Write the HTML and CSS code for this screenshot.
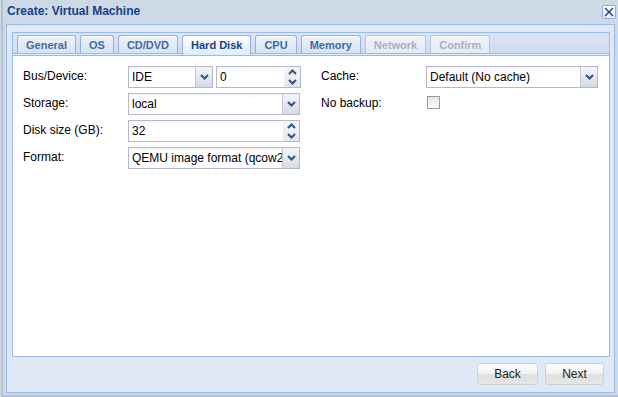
FILE: index.html
```html
<!DOCTYPE html>
<html lang="en">
<head>
    <meta charset="UTF-8">
    <link rel="stylesheet" href="styles.css">
    <title>Create: Virtual Machine</title>
</head>
<body>
    <div class="window">
        <div class="win-header">
            <span class="win-title">Create: Virtual Machine</span>
            <span class="win-close">
                <svg width="10" height="10" viewBox="0 0 10 10"><path d="M1 1L9 9M9 1L1 9" stroke="#15428b" stroke-width="1.4"/></svg>
            </span>
        </div>
        <div class="win-body">
            <div class="tabpanel">
                <div class="tabbar">
                    <span class="tab">General</span>
                    <span class="tab">OS</span>
                    <span class="tab">CD/DVD</span>
                    <span class="tab active">Hard Disk</span>
                    <span class="tab">CPU</span>
                    <span class="tab">Memory</span>
                    <span class="tab disabled">Network</span>
                    <span class="tab disabled">Confirm</span>
                </div>
                <div class="tab-spacer"></div>
                <div class="tab-body">
                    <div class="form-cols">
                        <div class="col">
                            <div class="row">
                                <label class="lbl">Bus/Device:</label>
                                <div class="pair">
                                    <div class="field combo small">
                                        <span class="val">IDE</span>
                                        <span class="trigger"><svg width="9" height="6" viewBox="0 0 9 6"><path d="M1 1L4.5 4.5L8 1" fill="none" stroke="#30527f" stroke-width="2"/></svg></span>
                                    </div>
                                    <div class="field spin small">
                                        <span class="val">0</span>
                                        <span class="spin-trigger">
                                            <span class="half"><svg width="9" height="6" viewBox="0 0 9 6"><path d="M1 5L4.5 1.5L8 5" fill="none" stroke="#30527f" stroke-width="2"/></svg></span>
                                            <span class="half"><svg width="9" height="6" viewBox="0 0 9 6"><path d="M1 1L4.5 4.5L8 1" fill="none" stroke="#30527f" stroke-width="2"/></svg></span>
                                        </span>
                                    </div>
                                </div>
                            </div>
                            <div class="row">
                                <label class="lbl">Storage:</label>
                                <div class="field combo">
                                    <span class="val">local</span>
                                    <span class="trigger"><svg width="9" height="6" viewBox="0 0 9 6"><path d="M1 1L4.5 4.5L8 1" fill="none" stroke="#30527f" stroke-width="2"/></svg></span>
                                </div>
                            </div>
                            <div class="row">
                                <label class="lbl">Disk size (GB):</label>
                                <div class="field spin">
                                    <span class="val">32</span>
                                    <span class="spin-trigger">
                                        <span class="half"><svg width="9" height="6" viewBox="0 0 9 6"><path d="M1 5L4.5 1.5L8 5" fill="none" stroke="#30527f" stroke-width="2"/></svg></span>
                                        <span class="half"><svg width="9" height="6" viewBox="0 0 9 6"><path d="M1 1L4.5 4.5L8 1" fill="none" stroke="#30527f" stroke-width="2"/></svg></span>
                                    </span>
                                </div>
                            </div>
                            <div class="row">
                                <label class="lbl">Format:</label>
                                <div class="field combo">
                                    <span class="val">QEMU image format (qcow2)</span>
                                    <span class="trigger"><svg width="9" height="6" viewBox="0 0 9 6"><path d="M1 1L4.5 4.5L8 1" fill="none" stroke="#30527f" stroke-width="2"/></svg></span>
                                </div>
                            </div>
                        </div>
                        <div class="col">
                            <div class="row">
                                <label class="lbl">Cache:</label>
                                <div class="field combo">
                                    <span class="val">Default (No cache)</span>
                                    <span class="trigger"><svg width="9" height="6" viewBox="0 0 9 6"><path d="M1 1L4.5 4.5L8 1" fill="none" stroke="#30527f" stroke-width="2"/></svg></span>
                                </div>
                            </div>
                            <div class="row">
                                <label class="lbl">No backup:</label>
                                <span class="checkbox"></span>
                            </div>
                        </div>
                    </div>
                </div>
            </div>
            <div class="win-footer">
                <button class="btn btn-back">Back</button>
                <button class="btn btn-next">Next</button>
            </div>
        </div>
    </div>
</body>
</html>
```

FILE: styles.css
```css
/* Global */
body {
    margin: 0;
    padding: 0;
    background-color: #ced9e7;
    font-family: 'Liberation Sans', Arial, sans-serif;
    font-size: 12px;
    color: #000;
}

/* Window frame */
.window {
    width: 615px;
    height: 395px;
    margin-left: 1px;
    border-left: 2px solid #b8c0cb;
    border-bottom: 2px solid #b8c0cb;
    background-color: #ced9e7;
}

.win-header {
    display: flex;
    align-items: center;
    justify-content: space-between;
    height: 24px;
    padding: 0 2px 0 4px;
}

.win-title {
    font-size: 12px;
    font-weight: bold;
    color: #15428b;
    line-height: 14px;
    margin-top: -2px;
}

.win-close {
    display: flex;
    align-items: center;
    justify-content: center;
    width: 12px;
    height: 12px;
    margin-top: 0;
    border: 1px solid #8eaed8;
    border-radius: 2px;
    background: linear-gradient(#ffffff, #e4ecf7);
}

.win-body {
    margin: 0 3px;
    height: 369px;
    box-sizing: border-box;
    border: 1px solid #99bbe8;
    background-color: #dfe8f6;
    padding: 7px 4px 0 5px;
}

/* Tabs */
.tabbar {
    display: flex;
    align-items: flex-start;
    gap: 4px;
    height: 18px;
    padding: 2px 0 0 4px;
    border: 1px solid #99bbe8;
    background: linear-gradient(#dbe6f5, #cfdcef);
}

.tab {
    height: 17px;
    padding: 0 8px;
    border: 1px solid #8db2e3;
    border-bottom: none;
    border-radius: 3px 3px 0 0;
    background: linear-gradient(#eef3fa, #d6e3f3);
    font-size: 11px;
    font-weight: bold;
    line-height: 18px;
    color: #416aa3;
    box-shadow: inset 0 1px 0 #fff;
}

.tab.active {
    height: 19px;
    position: relative;
    background: linear-gradient(#ffffff, #deecfd);
    color: #15428b;
}

.tab.disabled {
    color: #a8b1bd;
    background: linear-gradient(#f0f4fa, #e3ebf6);
    border-color: #a9c5ea;
}

.tab-spacer {
    height: 1px;
    border-left: 1px solid #99bbe8;
    border-right: 1px solid #99bbe8;
    background-color: #deecfd;
}

.tab-body {
    height: 302px;
    box-sizing: border-box;
    border: 1px solid #99bbe8;
    background-color: #fff;
    padding: 10px 10px 0 10px;
}

/* Form */
.form-cols {
    display: grid;
    grid-template-columns: 277px 277px;
    column-gap: 21px;
}

.row {
    display: flex;
    align-items: center;
    height: 22px;
    margin-bottom: 5px;
}

.lbl {
    width: 105px;
    flex: none;
    font-size: 12px;
    margin-top: -2px;
}

.pair {
    display: flex;
    gap: 3px;
    flex: 1;
}

.field {
    flex: 1;
    display: flex;
    height: 22px;
    box-sizing: border-box;
    border: 1px solid #b5b8c8;
    background: linear-gradient(#f4f4f4, #ffffff 4px);
    overflow: hidden;
}

.field.small {
    flex: none;
    width: 85px;
}

.val {
    flex: 1;
    min-width: 0;
    padding-left: 3px;
    line-height: 20px;
    white-space: nowrap;
    overflow: hidden;
}

.trigger {
    flex: none;
    width: 16px;
    display: flex;
    align-items: center;
    justify-content: center;
    border-left: 1px solid #c2c9d3;
    background: linear-gradient(#f3f5f8, #d6dce5);
}

.spin-trigger {
    flex: none;
    width: 16px;
    display: flex;
    flex-direction: column;
    background: linear-gradient(#f7f8fa, #e3e7ed);
}

.spin-trigger .half {
    flex: 1;
    display: flex;
    align-items: center;
    justify-content: center;
}

.checkbox {
    display: block;
    width: 11px;
    height: 11px;
    margin-left: 1px;
    margin-top: -4px;
    border: 1px solid #9a9a9a;
    background: linear-gradient(#e4e4e4, #fdfdfd);
}

/* Footer buttons */
.win-footer {
    display: flex;
    justify-content: flex-end;
    gap: 7px;
    padding: 6px 6px 0 0;
}

.btn {
    height: 22px;
    padding: 0;
    border: 1px solid #d0d0d0;
    border-radius: 3px;
    background: linear-gradient(#ffffff, #f0f0f0 50%, #e0e0e0 51%, #e6e6e6);
    font-family: 'Liberation Sans', Arial, sans-serif;
    font-size: 12px;
    color: #222;
}

.btn-back {
    width: 61px;
}

.btn-next {
    width: 59px;
}
```
